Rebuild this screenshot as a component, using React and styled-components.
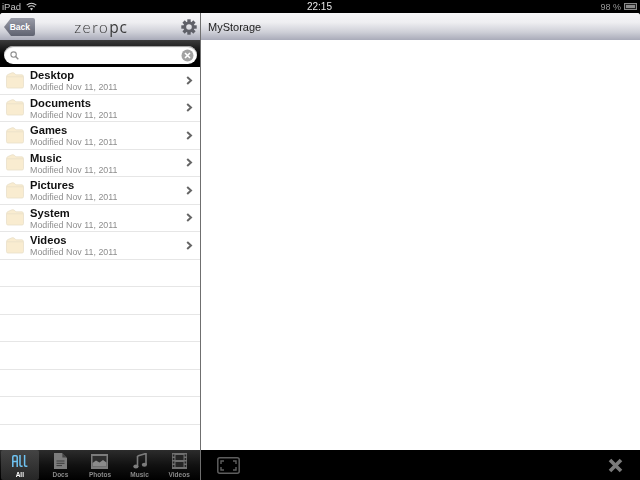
import React from 'react';
import styled, { createGlobalStyle, css } from 'styled-components';

const GlobalStyle = createGlobalStyle`
  html, body {
    margin: 0;
    padding: 0;
    width: 640px;
    height: 480px;
    overflow: hidden;
    background: #000;
    font-family: "Liberation Sans", Arial, sans-serif;
  }
`;

// own layer, so the text is drawn with grey antialiasing like the reference
const grayText = css`
  transform: translateZ(0);
`;

const Screen = styled.div`
  width: 640px;
  height: 480px;
  display: flex;
  flex-direction: column;
  background: #000;
`;

const StatusBar = styled.div`
  height: 13px;
  flex: none;
  display: grid;
  grid-template-columns: 1fr 1fr 1fr;
  align-items: center;
  padding: 0 3px 0 2px;
  font-size: 9.5px;
  line-height: 12px;
  color: #c4c4c4;
`;

const StatusLeft = styled.div`
  ${grayText}
  display: flex;
  align-items: center;
  gap: 5px;
`;

const StatusClock = styled.div`
  ${grayText}
  text-align: center;
  color: #e8e8e8;
  font-size: 10px;
`;

const StatusRight = styled.div`
  ${grayText}
  display: flex;
  justify-content: flex-end;
  align-items: center;
  gap: 3px;
  font-size: 9px;
  color: #999;
`;

const Battery = styled.div`
  width: 11px;
  height: 5px;
  border: 1px solid #8a8a8a;
  background: #8a8a8a;
  box-shadow: inset 0 0 0 1px #222;
`;

const Panels = styled.div`
  flex: 1;
  display: flex;
  min-height: 0;
`;

const Sidebar = styled.div`
  width: 200px;
  flex: none;
  display: flex;
  flex-direction: column;
  background: #fff;
  border-radius: 3px 0 0 0;
  overflow: hidden;
`;

const Divider = styled.div`
  width: 1px;
  flex: none;
  background: #6f6f6f;
`;

const Main = styled.div`
  flex: 1;
  display: flex;
  flex-direction: column;
  background: #fff;
  border-radius: 0 3px 0 0;
  overflow: hidden;
`;

const Canvas = styled.div`
  flex: 1;
  background: #fff;
`;

const barGradient = `linear-gradient(#f6f6f8 0%, #eeeef1 35%, #cfd0d8 70%, #a9abb9 100%)`;

const SideHeader = styled.div`
  height: 27px;
  flex: none;
  display: flex;
  align-items: center;
  justify-content: space-between;
  padding: 0 3px 0 4px;
  background: ${barGradient};
`;

const BackButton = styled.div`
  ${grayText}
  width: 31px;
  height: 18px;
  margin-top: 1px;
  display: flex;
  align-items: center;
  justify-content: flex-end;
  padding-right: 5px;
  box-sizing: border-box;
  font-size: 8.5px;
  font-weight: bold;
  color: #fff;
  background: linear-gradient(#9a9ca8, #5f6270);
  clip-path: polygon(0 50%, 7px 0, 100% 0, 100% 100%, 7px 100%);
  border-radius: 2px;
`;

const Logo = styled.div`
  ${grayText}
  font-family: "Open Sans", sans-serif;
  font-size: 15.5px;
  letter-spacing: 0.8px;
  color: #3a3a3a;
  margin-left: -14px;
`;

const LogoThin = styled.span`
  font-family: "Lato", sans-serif;
  font-weight: 300;
  letter-spacing: 1.6px;
  color: #333;
`;

const MainHeader = styled.div`
  height: 27px;
  flex: none;
  display: flex;
  align-items: center;
  padding-left: 7px;
  background: ${barGradient};
`;

const MainTitle = styled.div`
  ${grayText}
  font-size: 11px;
  color: #222;
`;

const SearchBar = styled.div`
  height: 27px;
  flex: none;
  display: flex;
  align-items: center;
  padding: 3px 3px 0 4px;
  box-sizing: border-box;
  background: linear-gradient(#3c3c3c, #050505 55%, #000);
`;

const SearchField = styled.div`
  flex: 1;
  height: 18px;
  display: flex;
  align-items: center;
  justify-content: space-between;
  padding: 0 3px 0 6px;
  background: #fff;
  border-radius: 9px;
  box-shadow: inset 0 1px 1px #999;
`;

const List = styled.div`
  flex: 1;
  min-height: 0;
  overflow: hidden;
`;

const Row = styled.div`
  height: 27.5px;
  box-sizing: border-box;
  display: flex;
  align-items: center;
  padding: 0 7px 0 6px;
  border-bottom: 1px solid #e6e6e6;
`;

const RowText = styled.div`
  ${grayText}
  flex: 1;
  margin-left: 6px;
  padding-top: 2px;
  display: flex;
  flex-direction: column;
`;

const RowName = styled.div`
  font-size: 11.2px;
  font-weight: bold;
  line-height: 13px;
  color: #111;
`;

const RowMeta = styled.div`
  font-size: 8.9px;
  line-height: 11px;
  color: #8e8e8e;
`;

const TabBar = styled.div`
  height: 30px;
  flex: none;
  display: flex;
  padding-left: 1px;
  background: linear-gradient(#2c2c2c, #111 50%, #000);
`;

const Tab = styled.div`
  width: 38px;
  margin-right: ${({ $active }) => ($active ? '3px' : '2px')};
  display: flex;
  flex-direction: column;
  align-items: center;
  justify-content: flex-end;
  padding-bottom: 1px;
  box-sizing: border-box;
  border-radius: 2px;
  background: ${({ $active }) => ($active ? 'linear-gradient(#444, #262626)' : 'transparent')};
`;

const TabIcon = styled.div`
  height: 20px;
  display: flex;
  align-items: center;
  justify-content: center;
`;

const TabLabel = styled.div`
  ${grayText}
  font-size: 6.5px;
  font-weight: bold;
  line-height: 8px;
  color: ${({ $active }) => ($active ? '#fff' : '#8a8a8a')};
`;

const Toolbar = styled.div`
  height: 30px;
  flex: none;
  display: flex;
  align-items: center;
  justify-content: space-between;
  padding: 0 17px 0 16px;
  background: #000;
`;

const Chevron = () => (
  <svg width="7" height="9" viewBox="0 0 7 9">
    <path d="M1.2 1 L5 4.5 L1.2 8" fill="none" stroke="#666" strokeWidth="2" />
  </svg>
);

const Folder = () => (
  <svg width="18" height="17" viewBox="0 0 18 17">
    <path
      d="M0.5 5 Q0.5 3 2 2.5 L6 0.8 Q7 0.5 8 1 L10 2.8 L16 2.8 Q17.5 3 17.5 5 L17.5 14.5 Q17.5 16 16 16 L2 16 Q0.5 16 0.5 14.5 Z"
      fill="#f9ecd0"
      stroke="#e8dfc9"
      strokeWidth="0.8"
    />
    <path d="M1 4.8 L17 4.8" stroke="#e8dfc9" strokeWidth="0.7" />
  </svg>
);

const Gear = () => (
  <svg width="16" height="16" viewBox="0 0 16 16">
    <g fill="#5f6068">
      {[0, 45, 90, 135, 180, 225, 270, 315].map((angle) => (
        <rect key={angle} x="6.3" y="0.3" width="3.4" height="4" transform={`rotate(${angle} 8 8)`} />
      ))}
    </g>
    <circle cx="8" cy="8" r="4.2" fill="none" stroke="#5f6068" strokeWidth="2.8" />
  </svg>
);

const Wifi = () => (
  <svg width="11" height="9" viewBox="0 0 11 9">
    <g fill="none" stroke="#d0d0d0" strokeWidth="1.1">
      <path d="M0.7 3.2 Q5.5 -0.8 10.3 3.2" />
      <path d="M2.3 5 Q5.5 2.4 8.7 5" />
    </g>
    <path d="M5.5 8.4 L3.9 6.6 Q5.5 5.4 7.1 6.6 Z" fill="#d0d0d0" />
  </svg>
);

const SearchIcon = () => (
  <svg width="9" height="9" viewBox="0 0 9 9">
    <circle cx="3.6" cy="3.6" r="2.7" fill="none" stroke="#8f8f8f" strokeWidth="1.1" />
    <path d="M5.6 5.6 L8.3 8.3" stroke="#8f8f8f" strokeWidth="1.4" />
  </svg>
);

const ClearIcon = () => (
  <svg width="13" height="13" viewBox="0 0 13 13">
    <circle cx="6.5" cy="6.5" r="6" fill="#a2a2a2" />
    <path d="M4 4 L9 9 M9 4 L4 9" stroke="#fff" strokeWidth="1.6" />
  </svg>
);

const AllIcon = () => (
  <svg width="16" height="12" viewBox="0 0 16 12">
    <g fill="none" stroke="#6fc3f2" strokeWidth="1.5">
      <path d="M0.8 12 L0.8 2 Q0.8 0.8 2 0.8 L4 0.8 Q5.2 0.8 5.2 2 L5.2 12 M0.8 6.5 L5.2 6.5" />
      <path d="M8 0 L8 10 Q8 11.2 9.2 11.2 L10.6 11.2" />
      <path d="M12.6 0 L12.6 10 Q12.6 11.2 13.8 11.2 L15.4 11.2" />
    </g>
  </svg>
);

const DocsIcon = () => (
  <svg width="13" height="16" viewBox="0 0 13 16">
    <path d="M0 0 L8 0 L13 5 L13 16 L0 16 Z" fill="#7c7c7c" />
    <path d="M8.4 0 L8.4 4.6 L13 4.6" fill="#444" />
    <path d="M2.5 8 H10.5 M2.5 10.3 H10.5 M2.5 12.6 H8" stroke="#3a3a3a" strokeWidth="1" />
  </svg>
);

const PhotosIcon = () => (
  <svg width="17" height="15" viewBox="0 0 17 15">
    <rect x="0" y="0" width="17" height="15" fill="#7c7c7c" />
    <rect x="1.5" y="2" width="14" height="10.5" fill="#2e2e2e" />
    <path d="M1.5 9 L5 6.5 L8.5 8.5 L12 6 L15.5 8.5 L15.5 12.5 L1.5 12.5 Z" fill="#8a8a8a" />
  </svg>
);

const MusicIcon = () => (
  <svg width="14" height="16" viewBox="0 0 14 16">
    <path d="M4.5 3 L13 0.5 L13 12" fill="none" stroke="#7c7c7c" strokeWidth="1.6" />
    <path d="M4.5 3 L4.5 14" stroke="#7c7c7c" strokeWidth="1.6" />
    <ellipse cx="2.9" cy="13.6" rx="2.6" ry="2" fill="#7c7c7c" />
    <ellipse cx="11.4" cy="11.8" rx="2.6" ry="2" fill="#7c7c7c" />
  </svg>
);

const VideosIcon = () => (
  <svg width="15" height="16" viewBox="0 0 15 16">
    <rect x="0" y="0" width="15" height="16" fill="#6f6f6f" />
    <rect x="3.5" y="2" width="8" height="5" fill="#242424" />
    <rect x="3.5" y="9" width="8" height="5" fill="#242424" />
    {[1.5, 5, 8.5, 12].map((y) => (
      <g key={y} fill="#242424">
        <rect x="0.8" y={y} width="1.6" height="2" />
        <rect x="12.6" y={y} width="1.6" height="2" />
      </g>
    ))}
  </svg>
);

const FullscreenIcon = () => (
  <svg width="23" height="17" viewBox="0 0 23 17">
    <rect x="0.8" y="0.8" width="21.4" height="15.4" rx="2" fill="none" stroke="#5e5e5e" strokeWidth="1.5" />
    <path d="M4 7 V4 H7 M16 4 H19 V7 M19 10 V13 H16 M7 13 H4 V10" fill="none" stroke="#5e5e5e" strokeWidth="1.4" />
  </svg>
);

const CloseIcon = () => (
  <svg width="15" height="15" viewBox="0 0 15 15">
    <path d="M2 2 L13 13 M13 2 L2 13" stroke="#7a7a7a" strokeWidth="3.6" />
  </svg>
);

const folders = ['Desktop', 'Documents', 'Games', 'Music', 'Pictures', 'System', 'Videos'];
const emptyRows = Array.from({ length: 7 }, (_, i) => i);

const tabs = [
  { label: 'All', icon: <AllIcon />, active: true },
  { label: 'Docs', icon: <DocsIcon /> },
  { label: 'Photos', icon: <PhotosIcon /> },
  { label: 'Music', icon: <MusicIcon /> },
  { label: 'Videos', icon: <VideosIcon /> },
];

const App = () => (
  <Screen>
    <GlobalStyle />
    <StatusBar>
      <StatusLeft>
        iPad
        <Wifi />
      </StatusLeft>
      <StatusClock>22:15</StatusClock>
      <StatusRight>
        98 %
        <Battery />
      </StatusRight>
    </StatusBar>
    <Panels>
      <Sidebar>
        <SideHeader>
          <BackButton>Back</BackButton>
          <Logo>
            <LogoThin>zero</LogoThin>pc
          </Logo>
          <Gear />
        </SideHeader>
        <SearchBar>
          <SearchField>
            <SearchIcon />
            <ClearIcon />
          </SearchField>
        </SearchBar>
        <List>
          {folders.map((name) => (
            <Row key={name}>
              <Folder />
              <RowText>
                <RowName>{name}</RowName>
                <RowMeta>Modified Nov 11, 2011</RowMeta>
              </RowText>
              <Chevron />
            </Row>
          ))}
          {emptyRows.map((i) => (
            <Row key={i} />
          ))}
        </List>
        <TabBar>
          {tabs.map(({ label, icon, active }) => (
            <Tab key={label} $active={active}>
              <TabIcon>{icon}</TabIcon>
              <TabLabel $active={active}>{label}</TabLabel>
            </Tab>
          ))}
        </TabBar>
      </Sidebar>
      <Divider />
      <Main>
        <MainHeader>
          <MainTitle>MyStorage</MainTitle>
        </MainHeader>
        <Canvas />
        <Toolbar>
          <FullscreenIcon />
          <CloseIcon />
        </Toolbar>
      </Main>
    </Panels>
  </Screen>
);

export default App;
